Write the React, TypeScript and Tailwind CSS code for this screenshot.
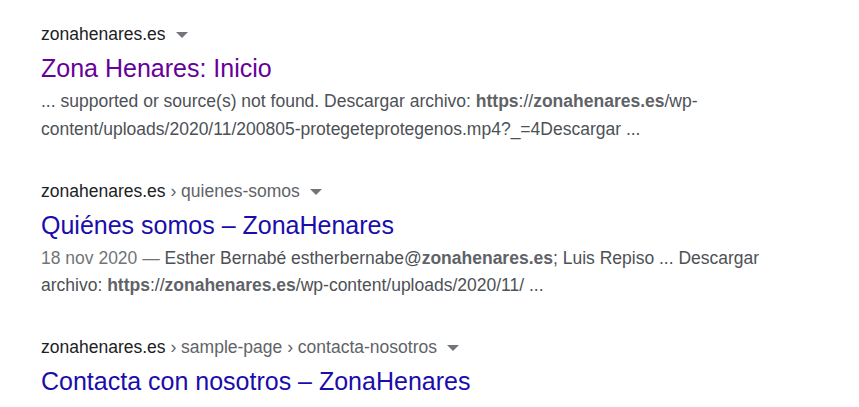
import React from 'react';

type Result = {
  host: string;
  crumbs: string[];
  title: string;
  visited?: boolean;
  lines?: React.ReactNode[];
};

const results: Result[] = [
  {
    host: 'zonahenares.es',
    crumbs: [],
    title: 'Zona Henares: Inicio',
    visited: true,
    lines: [
      <>
        ... supported or source(s) not found. Descargar archivo: <b className="font-bold text-[#5f6368]">https</b>://
        <b className="font-bold text-[#5f6368]">zonahenares.es</b>/wp-
      </>,
      <>content/uploads/2020/11/200805-protegeteprotegenos.mp4?_=4Descargar ...</>,
    ],
  },
  {
    host: 'zonahenares.es',
    crumbs: ['quienes-somos'],
    title: 'Quiénes somos – ZonaHenares',
    lines: [
      <>
        <span className="text-[#70757a]">18 nov 2020 — </span>Esther Bernabé estherbernabe@
        <b className="font-bold text-[#5f6368]">zonahenares.es</b>; Luis Repiso ... Descargar
      </>,
      <>
        archivo: <b className="font-bold text-[#5f6368]">https</b>://
        <b className="font-bold text-[#5f6368]">zonahenares.es</b>/wp-content/uploads/2020/11/ ...
      </>,
    ],
  },
  {
    host: 'zonahenares.es',
    crumbs: ['sample-page', 'contacta-nosotros'],
    title: 'Contacta con nosotros – ZonaHenares',
  },
];

function Caret() {
  return (
    <svg width="12" height="6" viewBox="0 0 12 6" className="inline-block align-middle ml-[10px]">
      <path d="M0 0 L12 0 L6 6 Z" fill="#70757a" />
    </svg>
  );
}

export default function App() {
  return (
    <div
      className="min-h-screen bg-white pl-[41px] pt-[20px]"
      style={{ fontFamily: '"Liberation Sans", Arial, sans-serif' }}
    >
      {results.map((r, i) => (
        <div key={i} className={i > 0 ? 'mt-[33.5px]' : ''}>
          <div className="h-[28px] text-[17.5px] leading-[28px] whitespace-nowrap">
            <span className="text-[#202124]">{r.host}</span>
            {r.crumbs.map((c) => (
              <span key={c} className="text-[#5f6368]">
                {' › ' + c}
              </span>
            ))}
            <Caret />
          </div>
          <div
            className={`mt-[4px] text-[25px] leading-[32px] whitespace-nowrap ${
              r.visited ? 'text-[#660099]' : 'text-[#1a0dab]'
            }`}
          >
            {r.title}
          </div>
          {r.lines && (
            <div className="mt-[4px] text-[17.5px] leading-[27.5px] text-[#4d5156]">
              {r.lines.map((l, j) => (
                <div key={j} className="whitespace-nowrap">
                  {l}
                </div>
              ))}
            </div>
          )}
        </div>
      ))}
    </div>
  );
}
